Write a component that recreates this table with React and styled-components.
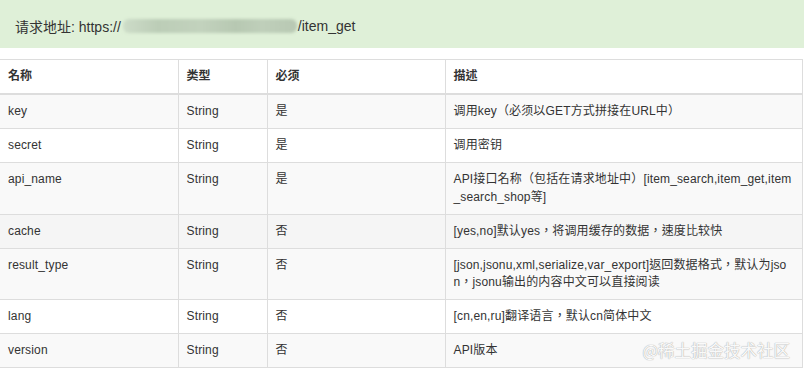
import styled, { createGlobalStyle } from 'styled-components';

const GlobalStyle = createGlobalStyle`
  body {
    margin: 0;
    background: #fff;
    font-family: "Liberation Sans", Arial, "Noto Sans CJK TC", sans-serif;
    color: #333;
  }
`;

const Page = styled.div`
  position: relative;
  width: 804px;
  height: 369px;
  overflow: hidden;
`;

const Banner = styled.div`
  height: 48px;
  box-sizing: border-box;
  padding: 3px 15px 0;
  background: #dff0d8;
  font-size: 14px;
  color: #333;
  display: flex;
  align-items: center;
`;

const Blurred = styled.span`
  display: inline-block;
  width: 174px;
  height: 14px;
  margin: 0 1px 0 2px;
  border-radius: 6px;
  background: linear-gradient(90deg, #cddcc8 0%, #bccdb7 20%, #c2d2bd 45%, #b7c8b2 65%, #bfcfba 80%, #b8c8b3 100%);
  filter: blur(1.5px);
`;

const Table = styled.table`
  margin-top: 11px;
  width: 803px;
  border-collapse: collapse;
  table-layout: fixed;
  font-size: 12px;
  line-height: 1.42857143;
`;

const Th = styled.th`
  text-align: left;
  font-weight: bold;
  padding: 8px;
  border: 1px solid #ddd;
  border-bottom: 2px solid #ddd;
  vertical-align: top;
  &:first-child { border-left: none; }
`;

const Row = styled.tr`
  background: ${p => (p.$hover ? '#f5f5f5' : p.$odd ? '#f9f9f9' : '#fff')};
`;

const Td = styled.td`
  padding: 8px;
  border: 1px solid #ddd;
  vertical-align: top;
  word-break: break-all;
  letter-spacing: 0.15px;
  &:first-child { border-left: none; }
`;

const Watermark = styled.div`
  position: absolute;
  right: 14px;
  bottom: 7px;
  font-family: "Noto Sans CJK SC", sans-serif;
  font-size: 16.5px;
  color: rgba(255, 255, 255, 0.95);
  text-shadow: 0 0 1px #aaa, 0 0 1px #bbb;
`;

const rows = [
  ['key', 'String', '是', '调用key（必须以GET方式拼接在URL中）'],
  ['secret', 'String', '是', '调用密钥'],
  ['api_name', 'String', '是', 'API接口名称（包括在请求地址中）[item_search,item_get,item_search_shop等]'],
  ['cache', 'String', '否', '[yes,no]默认yes，将调用缓存的数据，速度比较快'],
  ['result_type', 'String', '否', '[json,jsonu,xml,serialize,var_export]返回数据格式，默认为json，jsonu输出的内容中文可以直接阅读'],
  ['lang', 'String', '否', '[cn,en,ru]翻译语言，默认cn简体中文'],
  ['version', 'String', '否', 'API版本'],
];

export default function App() {
  return (
    <Page>
      <GlobalStyle />
      <Banner>
        请求地址: https://<Blurred />/item_get
      </Banner>
      <Table>
        <colgroup>
          <col style={{ width: 178 }} />
          <col style={{ width: 89 }} />
          <col style={{ width: 178 }} />
          <col />
        </colgroup>
        <thead>
          <tr>
            <Th>名称</Th>
            <Th>类型</Th>
            <Th>必须</Th>
            <Th>描述</Th>
          </tr>
        </thead>
        <tbody>
          {rows.map((r, i) => (
            <Row key={r[0]} $odd={i % 2 === 0} $hover={r[0] === 'cache'}>
              {r.map((c, j) => <Td key={j}>{c}</Td>)}
            </Row>
          ))}
        </tbody>
      </Table>
      <Watermark>@稀土掘金技术社区</Watermark>
    </Page>
  );
}
